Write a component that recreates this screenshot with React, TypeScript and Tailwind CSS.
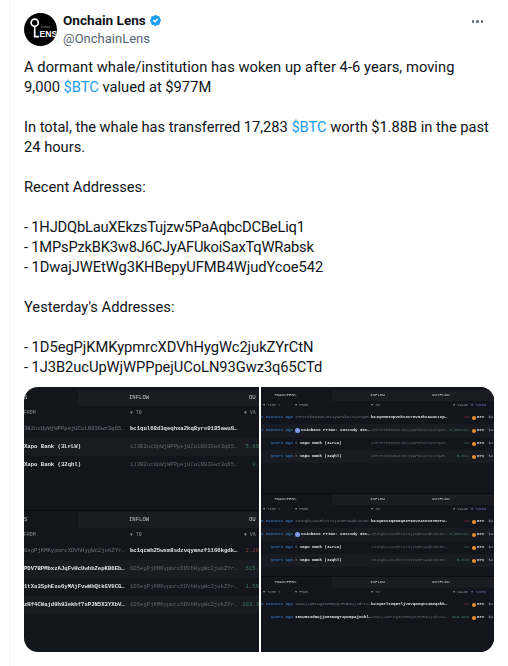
import { BadgeCheck } from "lucide-react";

type Row = { time?: string; from: string; to: string; value: string; tone: "red" | "green"; bold?: "from" | "to"; dot?: boolean; alt?: boolean };

const font = { fontFamily: '"Liberation Mono", monospace' };

const leftTop: Row[] = [
  { from: "3B2ucUpWjWPPpejUCoLN93Gwz3q65…", to: "bc1qul68d3qeqhxa2kq8yrs0185awu8…", value: "", tone: "red", bold: "to" },
  { from: "Xapo Bank (3LrLW)", to: "1J3B2ucUpWjWPPpejUCoLN93Gwz3q65…", value: "5.99", tone: "green", bold: "from", alt: true },
  { from: "Xapo Bank (32qhl)", to: "1J3B2ucUpWjWPPpejUCoLN93Gwz3q65…", value: "0.", tone: "green", bold: "from" },
];

const leftBottom: Row[] = [
  { from: "6egPjKMKypmrcXDVhHygWc2jukZYr…", to: "bc1qcmh25wxm8sdzvqymnzf1166kgdk…", value: "2.20", tone: "red", bold: "to" },
  { from: "PDV7BPMbxzAJqFvHcUwhbZepKB6Eb…", to: "1D5egPjKMKypmrcXDVhHygWc2jukZYr…", value: "515.", tone: "green", bold: "from", alt: true },
  { from: "1tXa3SphExo6yMAjFvwWhQtkGV9CG…", to: "1D5egPjKMKypmrcXDVhHygWc2jukZYr…", value: "1.56", tone: "green", bold: "from" },
  { from: "zHf4CWajd9h93ekhf7xPJN5X3YXbV…", to: "1D5egPjKMKypmrcXDVhHygWc2jukZYr…", value: "203.3", tone: "green", bold: "from", alt: true },
];

const rightA: Row[] = [
  { time: "7 minutes ago", from: "1MPsPzkBK3w8J6CJyAFUkoiSaxTqWR…", to: "bc1qzmn9vpvnkx3s70v03ksaw4stzp…", value: "4K", tone: "red", bold: "to" },
  { time: "7 minutes ago", from: "Coinbase Prime: Custody Ges…", to: "1MPsPzkBK3w8J6CJyAFUkoiSaxTqWR…", value: "0.000204", tone: "green", bold: "from", dot: true, alt: true },
  { time: "years ago", from: "▫ Xapo Bank (3LrLW)", to: "1MPsPzkBK3w8J6CJyAFUkoiSaxTqWR…", value: "4K", tone: "green", bold: "from" },
  { time: "years ago", from: "▫ Xapo Bank (32qhl)", to: "1MPsPzkBK3w8J6CJyAFUkoiSaxTqWR…", value: "0.012", tone: "green", bold: "from", alt: true },
];

const rightB: Row[] = [
  { time: "8 minutes ago", from: "1HJDQbLauXEkzsTujzw5PaAqbcDCBe…", to: "bc1q00s3q90aq82Y9wvv4snx67mzrw…", value: "4K", tone: "red", bold: "to" },
  { time: "8 minutes ago", from: "Coinbase Prime: Custody Ges…", to: "1HJDQbLauXEkzsTujzw5PaAqbcDCBe…", value: "0.000204", tone: "green", bold: "from", dot: true, alt: true },
  { time: "years ago", from: "▫ Xapo Bank (3LrLW)", to: "1HJDQbLauXEkzsTujzw5PaAqbcDCBe…", value: "4K", tone: "green", bold: "from" },
  { time: "years ago", from: "▫ Xapo Bank (32qhl)", to: "1HJDQbLauXEkzsTujzw5PaAqbcDCBe…", value: "0.026", tone: "green", bold: "from", alt: true },
];

const rightC: Row[] = [
  { time: "8 minutes ago", from: "1DwajJWEtWg3KHBepyUFMB4WjudYco…", to: "bc1q8elzzq5TljvnvqOeqetumzq9kk…", value: "1K", tone: "red", bold: "to" },
  { time: "years ago", from: "18cUNS3dNUjjU8eKNQTJpXGp4jXcbl…", to: "1DwajJWEtWg3KHBepyUFMB4WjudYco…", value: "999.998", tone: "green", bold: "from" },
];

const LeftPanel = ({ rows, first, className }: { rows: Row[]; first?: boolean; className: string }) => (
  <div className={`flex flex-col overflow-hidden bg-[#13151d] ${className}`} style={font}>
    <div className={`flex shrink-0 h-[16px] text-[5.6px] text-[#c4c6cb] ${first ? "mt-[3px]" : "mt-px"}`}>
      <div className="w-[54px] leading-[16px]">S</div>
      <div className="flex-1 bg-[#1a1c22] leading-[16px] pl-[51px]">INFLOW</div>
      <div className="bg-[#1a1c22] leading-[16px] w-[10px]">OU</div>
    </div>
    <div className="flex shrink-0 h-[14px] items-center text-[4.8px] text-[#8d9096]">
      <div className="w-[106px]">FROM</div>
      <div className="w-[114px]">▼ TO</div>
      <div className="whitespace-nowrap">▼ VA</div>
    </div>
    {rows.map((r, i) => (
      <div key={i} className={`flex shrink-0 h-[18px] items-center text-[5.6px] whitespace-nowrap overflow-hidden ${r.alt ? "bg-[#191b22]" : ""}`}>
        <div className={`w-[106px] shrink-0 overflow-hidden ${r.bold === "from" ? "text-[#e4e5e8] font-bold" : "text-[#70737a]"}`}>{r.from}</div>
        <div className={`w-[112px] shrink-0 overflow-hidden ${r.bold === "to" ? "text-[#e4e5e8] font-bold" : "text-[#62656c]"}`}>{r.to}</div>
        <div className={`w-[17px] shrink-0 text-right ${r.tone === "red" ? "text-[#8f3a3f]" : "text-[#3f7a58]"}`}>{r.value}</div>
      </div>
    ))}
  </div>
);

const RightPanel = ({ rows, first, className }: { rows: Row[]; first?: boolean; className: string }) => (
  <div className={`flex flex-col overflow-hidden bg-[#13151d] ${className}`} style={font}>
    <div className={`flex shrink-0 h-[11px] text-[4.2px] leading-[11px] text-[#c4c6cb] ${first ? "mt-[3px]" : ""}`}>
      <div className="w-[71px] pl-[13px]">TRANSFERS</div>
      <div className="flex-1 bg-[#1a1c22] pl-[38px]">INFLOW</div>
      <div className="w-[82px] bg-[#1a1c22] pl-[20px]">OUTFLOW</div>
    </div>
    <div className="flex shrink-0 h-[10px] items-center text-[3.6px] text-[#8d9096] whitespace-nowrap">
      <div className="w-[34px] pl-[2px]">▼ TIME ▾</div>
      <div className="w-[76px]">▼ FROM</div>
      <div className="w-[78px]">▼ TO</div>
      <div className="w-[22px] pl-[4px]">▼ VALUE</div>
      <div className="text-[#6a6fb0]">▼ TOKEN</div>
    </div>
    {rows.map((r, i) => (
      <div key={i} className={`flex shrink-0 h-[13px] items-center text-[4.1px] whitespace-nowrap overflow-hidden ${r.alt ? "bg-[#191b22]" : ""}`}>
        <div className="w-[34px] shrink-0 text-[#2e6fae] font-bold text-right pr-[2px]">{r.time}</div>
        <div className={`flex items-center gap-px w-[76px] shrink-0 overflow-hidden ${r.bold === "from" ? "text-[#dfe0e4] font-bold" : "text-[#6d7077]"}`}>
          {r.dot && <span className="w-[5px] h-[5px] rounded-full bg-[#7d9ff0] shrink-0" />}
          {r.from}
        </div>
        <div className={`w-[78px] shrink-0 overflow-hidden ${r.bold === "to" ? "text-[#dfe0e4] font-bold" : "text-[#5f6269]"}`}>{r.to}</div>
        <div className={`w-[20px] shrink-0 text-right ${r.tone === "red" ? "text-[#8f3a3f]" : "text-[#3f7a58]"}`}>{r.value}</div>
        <span className="ml-[3px] w-[4px] h-[4px] rounded-full bg-[#e8912d] shrink-0" />
        <span className="ml-[1px] text-[#c9cbd0] font-bold">BTC</span>
        <span className="ml-[4px] text-[#a6a8ad]">$1</span>
      </div>
    ))}
  </div>
);

export default function App() {
  return (
    <div className="w-[508px] h-[666px] overflow-hidden bg-white text-[#0f1419]" style={{ fontFamily: 'Roboto, sans-serif' }}>
      <div className="ml-[9px] h-full border-l border-[#eff3f4] pl-[14px] pr-6 pt-[13px]">
        <div className="flex h-[33px]">
          <div className="w-[33px] h-[33px] rounded-full bg-black shrink-0 relative overflow-hidden">
            <svg viewBox="0 0 33 33" className="w-[33px] h-[33px]">
              <circle cx="10.7" cy="9.7" r="3.6" fill="none" stroke="#fff" strokeWidth="1.7" />
              <path d="M10.7 13.5 V23.6 H15" fill="none" stroke="#fff" strokeWidth="1.7" />
              <text x="16.5" y="14.5" fill="#9a9a9a" fontSize="2.6" fontFamily="Liberation Sans, sans-serif">Onchain</text>
              <text x="15.5" y="24" fill="#fff" fontSize="8.6" fontWeight="700" fontFamily="Liberation Sans, sans-serif">ENS</text>
            </svg>
          </div>
          <div className="ml-[6px] flex-1 -mt-[3px]">
            <div className="flex items-center text-[13.6px] leading-[20px] font-bold">
              Onchain Lens
              <BadgeCheck className="ml-[2px] w-[15px] h-[15px] text-white fill-[#1d9bf0]" strokeWidth={2.4} />
            </div>
            <div className="text-[13px] leading-[18px] text-[#536471]">@OnchainLens</div>
          </div>
          <div className="flex gap-[2px] mt-[7px] mr-[1px] h-[2px]">
            <span className="w-[2.5px] h-[2.5px] rounded-full bg-[#536471]" />
            <span className="w-[2.5px] h-[2.5px] rounded-full bg-[#536471]" />
            <span className="w-[2.5px] h-[2.5px] rounded-full bg-[#536471]" />
          </div>
        </div>

        <div className="mt-[11px] text-[14.7px] leading-[20px] whitespace-nowrap">
          <p className="tracking-[0.04px]">A dormant whale/institution has woken up after 4-6 years, moving</p>
          <p>9,000 <span className="text-[#1d9bf0]">$BTC</span> valued at $977M</p>
          <p className="mt-5 tracking-[-0.03px]">In total, the whale has transferred 17,283 <span className="text-[#1d9bf0]">$BTC</span> worth $1.88B in the past</p>
          <p>24 hours.</p>
          <p className="mt-5">Recent Addresses:</p>
          <p className="mt-5 tracking-[-0.2px]">- 1HJDQbLauXEkzsTujzw5PaAqbcDCBeLiq1</p>
          <p className="tracking-[-0.2px]">- 1MPsPzkBK3w8J6CJyAFUkoiSaxTqWRabsk</p>
          <p className="tracking-[-0.06px]">- 1DwajJWEtWg3KHBepyUFMB4WjudYcoe542</p>
          <p className="mt-5">Yesterday's Addresses:</p>
          <p className="mt-5 tracking-[-0.04px]">- 1D5egPjKMKypmrcXDVhHygWc2jukZYrCtN</p>
          <p className="tracking-[-0.06px]">- 1J3B2ucUpWjWPPpejUCoLN93Gwz3q65CTd</p>
        </div>

        <div className="mt-[10px] flex gap-[2px] h-[265px] w-[470px] rounded-[14px] overflow-hidden blur-[0.4px]">
          <div className="w-[235px] flex flex-col">
            <LeftPanel rows={leftTop} first className="h-[123px]" />
            <LeftPanel rows={leftBottom} className="flex-1 border-t border-[#0b0c10]" />
          </div>
          <div className="flex-1 flex flex-col gap-px bg-[#0a0b0f]">
            <RightPanel rows={rightA} first className="h-[106px]" />
            <RightPanel rows={rightB} className="h-[82px]" />
            <RightPanel rows={rightC} className="flex-1" />
          </div>
        </div>
      </div>
    </div>
  );
}
